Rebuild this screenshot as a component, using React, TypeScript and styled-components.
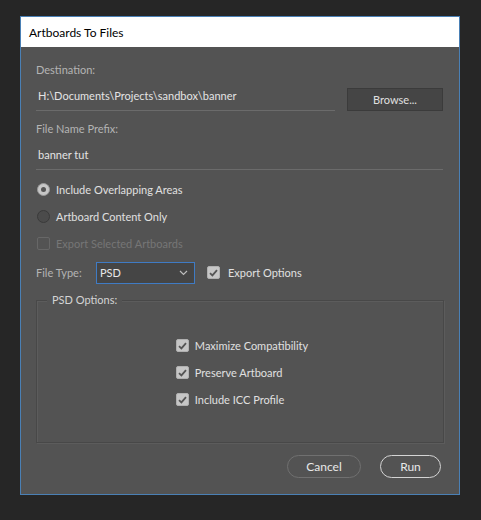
import React from "react";
import styled, { createGlobalStyle } from "styled-components";

const Global = createGlobalStyle`
  html, body { margin: 0; padding: 0; background: #262626; }
  body { font-family: "Segoe UI", Lato, "Noto Sans", sans-serif; }
  * { box-sizing: border-box; }
`;

const Screen = styled.div`
  width: 481px;
  height: 520px;
  padding: 16px 0 0 20px;
  background: #262626;
`;

const Dialog = styled.div`
  width: 440px;
  height: 479px;
  border: 1px solid #4a80b5;
  background: #535353;
  display: flex;
  flex-direction: column;
`;

const TitleBar = styled.div`
  height: 30px;
  background: #ffffff;
  color: #000;
  font-size: 12px;
  display: flex;
  align-items: center;
  padding-left: 8px;
`;

const Body = styled.div`
  display: flex;
  flex-direction: column;
  padding: 15px 15px 0 15px;
  font-size: 11px;
`;

const Label = styled.div<{ $mt?: number }>`
  height: 16px;
  line-height: 16px;
  color: #b4b4b4;
  margin-top: ${(p) => p.$mt ?? 0}px;
`;

const Row = styled.div<{ $mt?: number }>`
  display: flex;
  align-items: flex-start;
  gap: 12px;
  margin-top: ${(p) => p.$mt ?? 0}px;
`;

const Field = styled.div<{ $w: number }>`
  width: ${(p) => p.$w}px;
  height: 23px;
  border-bottom: 1px solid #6b6b6b;
  color: #e4e4e4;
  line-height: 16px;
  padding-left: 2px;
`;

const BrowseButton = styled.button`
  width: 96px;
  height: 23px;
  background: #454545;
  border: 1px solid #3b3b3b;
  color: #e0e0e0;
  font: inherit;
  padding: 0;
`;

const OptionRow = styled.label<{ $disabled?: boolean }>`
  height: 27px;
  display: flex;
  align-items: center;
  gap: 6px;
  color: ${(p) => (p.$disabled ? "#767676" : "#e0e0e0")};
  padding-left: 1px;
`;

const RadioDot = styled.span<{ $on?: boolean }>`
  width: 13px;
  height: 13px;
  border-radius: 50%;
  background: ${(p) => (p.$on ? "#c6c6c6" : "#4b4b4b")};
  border: 1px solid ${(p) => (p.$on ? "#9a9a9a" : "#3a3a3a")};
  display: flex;
  align-items: center;
  justify-content: center;
  &::after {
    content: "";
    display: ${(p) => (p.$on ? "block" : "none")};
    width: 5px;
    height: 5px;
    border-radius: 50%;
    background: #555;
  }
`;

const Box = styled.span<{ $on?: boolean; $disabled?: boolean }>`
  width: 13px;
  height: 13px;
  border-radius: 2px;
  flex: none;
  background: ${(p) => (p.$on ? "#c6c6c6" : "transparent")};
  border: 1px solid ${(p) => (p.$on ? "#b0b0b0" : p.$disabled ? "#676767" : "#3a3a3a")};
  display: flex;
  align-items: center;
  justify-content: center;
`;

const Check = () => (
  <svg width="9" height="8" viewBox="0 0 9 8">
    <path d="M1 4.2 L3.4 6.4 L8 1.2" fill="none" stroke="#555" strokeWidth="1.8" />
  </svg>
);

const TypeRow = styled.div`
  display: flex;
  align-items: center;
  height: 23px;
  margin-top: 4px;
`;

const TypeLabel = styled.span`
  color: #b4b4b4;
  width: 60px;
`;

const Select = styled.div`
  width: 99px;
  height: 22px;
  background: #454545;
  border: 1px solid #3f7bc4;
  color: #e8e8e8;
  display: flex;
  align-items: center;
  justify-content: space-between;
  padding: 0 6px 0 3px;
`;

const InlineCheck = styled.label`
  display: flex;
  align-items: center;
  gap: 8px;
  margin-left: 12px;
  color: #e0e0e0;
`;

const Group = styled.fieldset`
  margin: 16px 0 0 0;
  padding: 0;
  height: 143px;
  border: 1px solid #484848;
  box-shadow: inset 1px 1px 0 #5c5c5c, 1px 1px 0 #5c5c5c;
  position: relative;
  display: flex;
  justify-content: center;
`;

const GroupTitle = styled.legend`
  position: absolute;
  top: -9px;
  left: 10px;
  padding: 0 5px;
  background: #535353;
  color: #d4d4d4;
  line-height: 16px;
`;

const GroupList = styled.div`
  display: flex;
  flex-direction: column;
  padding-top: 31px;
  margin-left: 3px;
`;

const Footer = styled.div`
  display: flex;
  justify-content: flex-end;
  gap: 19px;
  margin-top: 12px;
  padding-right: 3px;
`;

const Pill = styled.button<{ $w: number; $primary?: boolean }>`
  width: ${(p) => p.$w}px;
  height: 23px;
  border-radius: 12px;
  background: transparent;
  border: 1.5px solid ${(p) => (p.$primary ? "#d4d4d4" : "#707070")};
  color: #e8e8e8;
  font: inherit;
  font-size: 12px;
  padding: 0;
`;

export default function App() {
  return (
    <Screen>
      <Global />
      <Dialog>
        <TitleBar>Artboards To Files</TitleBar>
        <Body>
          <Label>Destination:</Label>
          <Row $mt={10}>
            <Field $w={299}>H:\Documents\Projects\sandbox\banner</Field>
            <BrowseButton>Browse...</BrowseButton>
          </Row>
          <Label $mt={10}>File Name Prefix:</Label>
          <Row $mt={10}>
            <Field $w={407}>banner tut</Field>
          </Row>
          <div style={{ height: 6 }} />
          <OptionRow>
            <RadioDot $on />
            Include Overlapping Areas
          </OptionRow>
          <OptionRow>
            <RadioDot />
            Artboard Content Only
          </OptionRow>
          <OptionRow $disabled>
            <Box $disabled />
            Export Selected Artboards
          </OptionRow>
          <TypeRow>
            <TypeLabel>File Type:</TypeLabel>
            <Select>
              PSD
              <svg width="9" height="6" viewBox="0 0 9 6">
                <path d="M1 1 L4.5 4.5 L8 1" fill="none" stroke="#bdbdbd" strokeWidth="1.2" />
              </svg>
            </Select>
            <InlineCheck>
              <Box $on>
                <Check />
              </Box>
              Export Options
            </InlineCheck>
          </TypeRow>
          <Group>
            <GroupTitle>PSD Options:</GroupTitle>
            <GroupList>
              <OptionRow>
                <Box $on>
                  <Check />
                </Box>
                Maximize Compatibility
              </OptionRow>
              <OptionRow>
                <Box $on>
                  <Check />
                </Box>
                Preserve Artboard
              </OptionRow>
              <OptionRow>
                <Box $on>
                  <Check />
                </Box>
                Include ICC Profile
              </OptionRow>
            </GroupList>
          </Group>
          <Footer>
            <Pill $w={74}>Cancel</Pill>
            <Pill $w={61} $primary>
              Run
            </Pill>
          </Footer>
        </Body>
      </Dialog>
    </Screen>
  );
}
